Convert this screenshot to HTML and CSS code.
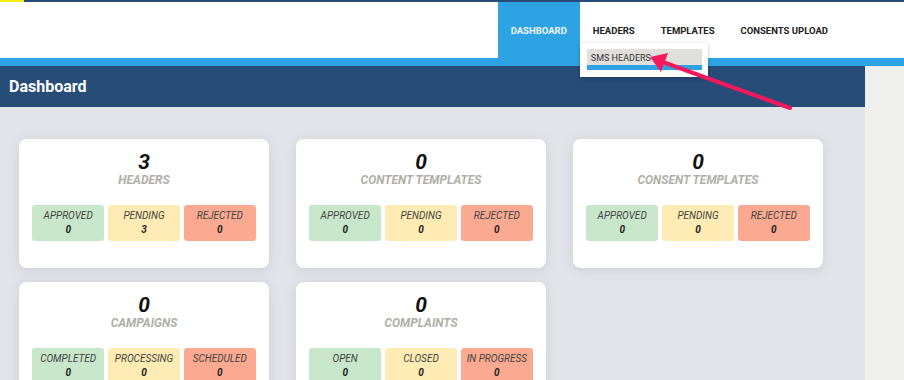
FILE: index.html
```html
<!DOCTYPE html>
<html lang="en">
<head>
    <meta charset="UTF-8">
    <meta name="viewport" content="width=device-width, initial-scale=1.0">
    <title>Dashboard</title>
    <link rel="stylesheet" href="styles.css">
</head>

<body>
    <div class="topline"><span class="brandmark"></span></div>
    <header class="header">
        <nav class="nav">
            <a href="javascript:;" class="nav-item active">DASHBOARD</a>
            <div class="nav-drop">
                <a href="javascript:;" class="nav-item">HEADERS</a>
                <div class="dropdown">
                    <a href="javascript:;" class="drop-item">SMS HEADERS</a>
                </div>
            </div>
            <a href="javascript:;" class="nav-item">TEMPLATES</a>
            <a href="javascript:;" class="nav-item">CONSENTS UPLOAD</a>
        </nav>
    </header>
    <div class="stripe"></div>

    <div class="page">
        <main class="main">
            <div class="titlebar">Dashboard</div>
            <div class="cards">
                <div class="card">
                    <div class="count">3</div>
                    <div class="label">HEADERS</div>
                    <div class="stats">
                        <div class="stat green"><span>APPROVED</span><b>0</b></div>
                        <div class="stat yellow"><span>PENDING</span><b>3</b></div>
                        <div class="stat red"><span>REJECTED</span><b>0</b></div>
                    </div>
                </div>
                <div class="card">
                    <div class="count">0</div>
                    <div class="label">CONTENT TEMPLATES</div>
                    <div class="stats">
                        <div class="stat green"><span>APPROVED</span><b>0</b></div>
                        <div class="stat yellow"><span>PENDING</span><b>0</b></div>
                        <div class="stat red"><span>REJECTED</span><b>0</b></div>
                    </div>
                </div>
                <div class="card">
                    <div class="count">0</div>
                    <div class="label">CONSENT TEMPLATES</div>
                    <div class="stats">
                        <div class="stat green"><span>APPROVED</span><b>0</b></div>
                        <div class="stat yellow"><span>PENDING</span><b>0</b></div>
                        <div class="stat red"><span>REJECTED</span><b>0</b></div>
                    </div>
                </div>
                <div class="card">
                    <div class="count">0</div>
                    <div class="label">CAMPAIGNS</div>
                    <div class="stats">
                        <div class="stat green"><span>COMPLETED</span><b>0</b></div>
                        <div class="stat yellow"><span>PROCESSING</span><b>0</b></div>
                        <div class="stat red"><span>SCHEDULED</span><b>0</b></div>
                    </div>
                </div>
                <div class="card">
                    <div class="count">0</div>
                    <div class="label">COMPLAINTS</div>
                    <div class="stats">
                        <div class="stat green"><span>OPEN</span><b>0</b></div>
                        <div class="stat yellow"><span>CLOSED</span><b>0</b></div>
                        <div class="stat red"><span>IN PROGRESS</span><b>0</b></div>
                    </div>
                </div>
            </div>
        </main>
        <aside class="side"></aside>
    </div>

    <!-- annotation arrow pointing at the dropdown item -->
    <svg class="arrow" width="904" height="380" viewBox="0 0 904 380">
        <line x1="790" y1="108" x2="660" y2="61" stroke="#f5185c" stroke-width="4" stroke-linecap="round"/>
        <polygon points="650,57 668,53 661,72" fill="#f5185c"/>
    </svg>
</body>

</html>
```

FILE: styles.css
```css
* {
    margin: 0;
    padding: 0;
    box-sizing: border-box;
}

body {
    font-family: Roboto, "Liberation Sans", Arial, sans-serif;
    background-color: #fff;
    width: 904px;
    height: 380px;
    overflow: hidden;
    position: relative;
}

a {
    text-decoration: none;
}

.topline {
    height: 2px;
    background-color: #284c77;
}

.brandmark {
    display: block;
    width: 24px;
    height: 2px;
    background-color: #f8ee16;
}

.header {
    height: 56px;
    background-color: #fff;
}

.nav {
    display: flex;
    justify-content: flex-end;
    padding-right: 63px;
    height: 56px;
}

.nav-item {
    display: flex;
    align-items: center;
    height: 56px;
    padding: 0 13px;
    font-size: 9.5px;
    font-weight: 700;
    color: #222;
}

.nav-item.active {
    background-color: #2da3e3;
    color: #f1f6fb;
}

.nav-drop {
    position: relative;
}

/* 下拉菜单 */
.dropdown {
    position: absolute;
    top: 41px;
    left: 0;
    width: 128px;
    padding: 6px 6px 7px 7px;
    background-color: #fff;
    box-shadow: 0 1px 4px rgba(0, 0, 0, 0.25);
    z-index: 5;
}

.drop-item {
    display: block;
    height: 21px;
    padding: 3px 4px 0;
    font-size: 9px;
    color: #333;
    background-color: #e0dfdc;
    border-bottom: 5px solid #2da3e3;
    line-height: 12px;
}

.stripe {
    height: 8px;
    background-color: #2ea3e3;
}

.page {
    display: flex;
    height: 314px;
}

.main {
    width: 865px;
    background-color: #e3e4e9;
}

.side {
    flex: 1;
    background-color: #efefee;
}

.titlebar {
    height: 41px;
    background-color: #274c77;
    color: #fff;
    font-size: 16px;
    font-weight: 700;
    line-height: 41px;
    padding-left: 9px;
}

.cards {
    display: grid;
    grid-template-columns: repeat(3, 250px);
    column-gap: 27px;
    row-gap: 14px;
    padding: 32px 0 0 19px;
}

.card {
    background-color: #fff;
    border-radius: 8px;
    box-shadow: 0 2px 12px rgba(160, 165, 180, 0.35);
    padding: 12px 13px 27px;
    text-align: center;
}

.count {
    font-size: 21px;
    line-height: 22px;
    font-weight: 700;
    font-style: italic;
    color: #111;
}

.label {
    font-size: 12px;
    line-height: 14px;
    font-weight: 700;
    font-style: italic;
    color: #afafa7;
}

.stats {
    display: grid;
    grid-template-columns: repeat(3, 1fr);
    gap: 3.5px;
    margin-top: 18px;
}

.stat {
    height: 36px;
    border-radius: 3px;
    padding-top: 5px;
    font-size: 10px;
    font-style: italic;
    color: #444;
}

.stat span {
    display: block;
    line-height: 12px;
}

.stat b {
    display: block;
    line-height: 12px;
    margin-top: 2px;
    color: #222;
}

.green {
    background-color: #c8e6c9;
}

.yellow {
    background-color: #ffebb3;
}

.red {
    background-color: #fbaa91;
}

.arrow {
    position: absolute;
    top: 0;
    left: 0;
    z-index: 10;
    pointer-events: none;
}
```
